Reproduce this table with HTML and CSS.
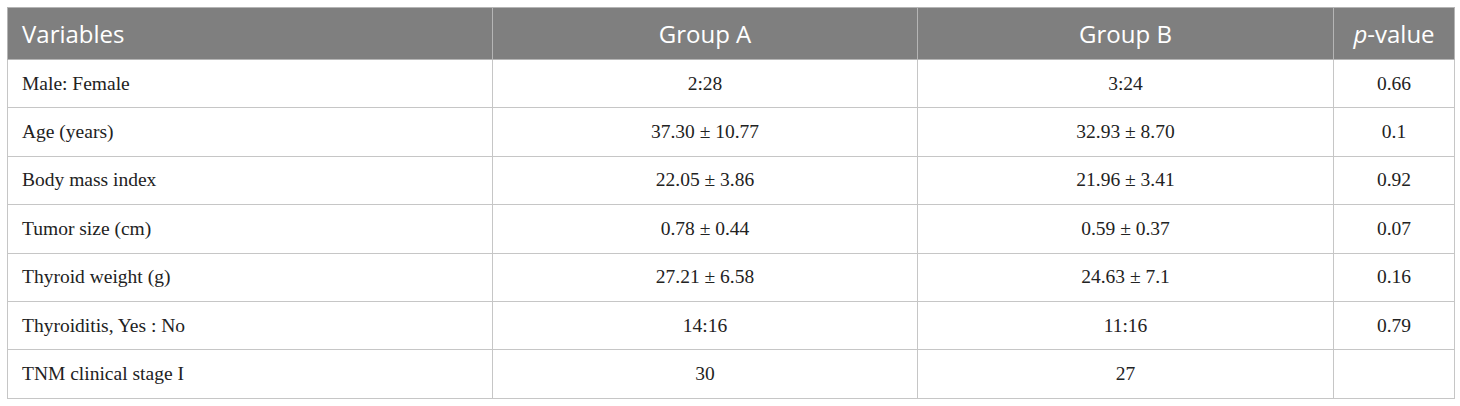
FILE: index.html
```html
<!DOCTYPE html>
<html>
<head>
<meta charset="utf-8">
<link rel="stylesheet" href="styles.css">
</head>
<body>
<table class="data">
  <colgroup>
    <col class="c1"><col class="c2"><col class="c3"><col class="c4">
  </colgroup>
  <thead>
    <tr><th class="left">Variables</th><th>Group A</th><th>Group B</th><th><i>p</i>-value</th></tr>
  </thead>
  <tbody>
    <tr><td class="left">Male: Female</td><td>2:28</td><td>3:24</td><td>0.66</td></tr>
    <tr><td class="left">Age (years)</td><td>37.30 ± 10.77</td><td>32.93 ± 8.70</td><td>0.1</td></tr>
    <tr><td class="left">Body mass index</td><td>22.05 ± 3.86</td><td>21.96 ± 3.41</td><td>0.92</td></tr>
    <tr><td class="left">Tumor size (cm)</td><td>0.78 ± 0.44</td><td>0.59 ± 0.37</td><td>0.07</td></tr>
    <tr><td class="left">Thyroid weight (g)</td><td>27.21 ± 6.58</td><td>24.63 ± 7.1</td><td>0.16</td></tr>
    <tr><td class="left">Thyroiditis, Yes : No</td><td>14:16</td><td>11:16</td><td>0.79</td></tr>
    <tr><td class="left">TNM clinical stage I</td><td>30</td><td>27</td><td></td></tr>
  </tbody>
</table>
</body>
</html>
```
FILE: styles.css
```css
html, body { margin: 0; padding: 0; background: #fff; }
body { padding: 7px 0 0 7px; }
.data {
  border-collapse: collapse;
  width: 1447px;
  table-layout: fixed;
}
.c1 { width: 485px; }
.c2 { width: 425px; }
.c3 { width: 416px; }
.c4 { width: 121px; }
.data th, .data td {
  border: 1px solid #c6c6c6;
  text-align: center;
  padding: 0 14px;
}
.data th {
  background: #7f7f7f;
  color: #fff;
  font-family: "Open Sans", sans-serif;
  font-weight: 400;
  font-size: 24px;
  height: 51px;
  border-color: #b5b5b5;
}
.data td {
  font-family: "Liberation Serif", serif;
  font-size: 19.5px;
  color: #222;
  height: 47.4px;
}
.data .left { text-align: left; }
```
